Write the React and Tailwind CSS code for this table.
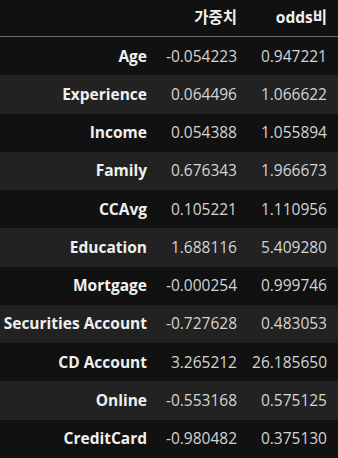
import React from "react";

const rows = [
  ["Age", "-0.054223", "0.947221"],
  ["Experience", "0.064496", "1.066622"],
  ["Income", "0.054388", "1.055894"],
  ["Family", "0.676343", "1.966673"],
  ["CCAvg", "0.105221", "1.110956"],
  ["Education", "1.688116", "5.409280"],
  ["Mortgage", "-0.000254", "0.999746"],
  ["Securities Account", "-0.727628", "0.483053"],
  ["CD Account", "3.265212", "26.185650"],
  ["Online", "-0.553168", "0.575125"],
  ["CreditCard", "-0.980482", "0.375130"],
];

const font = {
  fontFamily: '"Open Sans", "Noto Sans CJK KR", sans-serif',
};

export default function App() {
  return (
    <div
      className="w-[338px] h-[458px] bg-[#111111] overflow-hidden text-[15.5px]"
      style={font}
    >
      <div className="grid grid-cols-[157px_90px_90px] h-[37px] items-center border-b border-[#6e6e6e] font-bold text-[#f0f0f0]">
        <div />
        <div className="text-right pr-[10px]">가중치</div>
        <div className="text-right pr-[10px]">odds비</div>
      </div>
      {rows.map(([name, w, odds], i) => (
        <div
          key={name}
          className={`grid grid-cols-[157px_90px_90px] h-[38.27px] items-center ${
            i % 2 === 1 ? "bg-[#222222]" : "bg-[#111111]"
          }`}
        >
          <div className="text-right pr-[10px] font-bold text-[#f0f0f0] whitespace-nowrap">
            {name}
          </div>
          <div className="text-right pr-[10px] text-[#d4d4d4]">{w}</div>
          <div className="text-right pr-[10px] text-[#d4d4d4]">{odds}</div>
        </div>
      ))}
    </div>
  );
}
